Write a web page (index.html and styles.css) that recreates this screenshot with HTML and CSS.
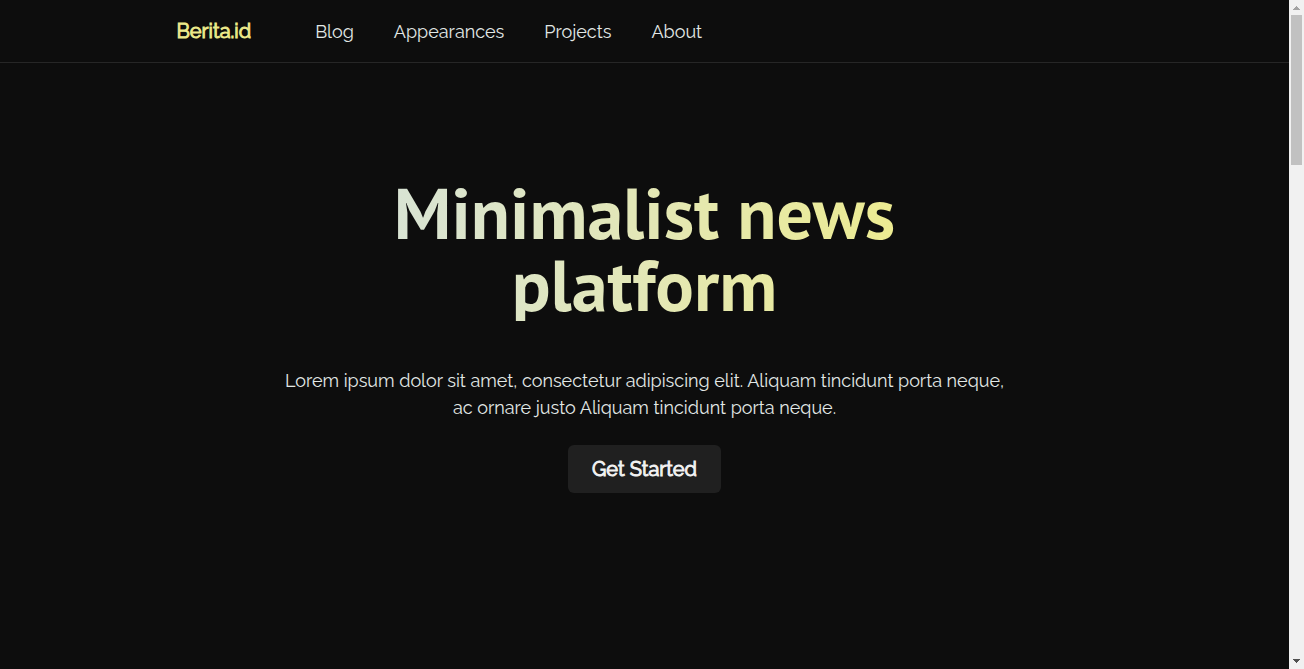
FILE: index.html
```html
<!DOCTYPE html>
<html lang="en">
<head>
<meta charset="utf-8">
<meta name="viewport" content="width=device-width, initial-scale=1">
<title>Berita.id</title>
<link rel="stylesheet" href="styles.css">
</head>
<body>
<div class="page">
  <header class="header">
    <div class="header-inner">
      <a class="brand" href="#">Berita.id</a>
      <nav class="nav">
        <a href="#">Blog</a>
        <a href="#">Appearances</a>
        <a href="#">Projects</a>
        <a href="#">About</a>
      </nav>
    </div>
  </header>
  <main class="hero">
    <h1 class="title">Minimalist news platform</h1>
    <p class="lead">Lorem ipsum dolor sit amet, consectetur adipiscing elit. Aliquam tincidunt porta neque, ac ornare justo Aliquam tincidunt porta neque.</p>
    <button class="cta" type="button">Get Started</button>
  </main>
</div>
<div class="scrollbar" aria-hidden="true">
  <svg class="arrow arrow-up" viewBox="0 0 15 15"><path d="M4 10h7v-1h-1v-1h-1v-1h-1v-1h-1v1h-1v1h-1v1h-1z"/></svg>
  <div class="track"><div class="thumb"></div></div>
  <svg class="arrow" viewBox="0 0 15 15"><path d="M4 5h7v1h-1v1h-1v1h-1v1h-1v-1h-1v-1h-1v-1h-1z"/></svg>
</div>
</body>
</html>
```
FILE: styles.css
```css
* {
  box-sizing: border-box;
}

body {
  margin: 0;
  display: flex;
  min-height: 100vh;
  background: #0d0d0d;
  color: #e2e8e6;
  font-family: Raleway, Lato, sans-serif;
  font-size: 18px;
  line-height: 27px;
}

a {
  color: inherit;
  text-decoration: none;
}

.page {
  flex: 1;
  min-width: 0;
}

.header {
  border-bottom: 1px solid #262626;
}

.header-inner {
  display: flex;
  align-items: center;
  gap: 64px;
  max-width: 936px;
  margin: 0 auto;
  padding: 16px 0;
}

.brand {
  color: #ece98a;
  font-size: 20px;
  line-height: 30px;
  -webkit-text-stroke: 1px currentColor;
}

.nav {
  display: flex;
  gap: 40px;
}

.hero {
  display: flex;
  flex-direction: column;
  align-items: center;
  max-width: 768px;
  margin: 0 auto;
  padding: 114px 24px 0;
  text-align: center;
}

.title {
  max-width: 576px;
  margin: 0;
  background: linear-gradient(to right, #d7e3d8, #e3e7b6 50%, #eeec8c);
  background-clip: text;
  -webkit-background-clip: text;
  color: transparent;
  font-family: "PT Sans", "Noto Sans", sans-serif;
  font-size: 72px;
  font-weight: 700;
  line-height: 72px;
}

.lead {
  margin: 46px 0 24px;
}

.cta {
  padding: 9px 24px;
  border: 0;
  border-radius: 6px;
  background: #202020;
  color: #f2f2f2;
  font: inherit;
  font-size: 20px;
  line-height: 30px;
  -webkit-text-stroke: 1px currentColor;
}

.scrollbar {
  display: flex;
  flex-direction: column;
  width: 15px;
  height: 100vh;
  background: #f1f1f1;
}

.arrow {
  width: 15px;
  height: 15px;
  fill: #505050;
}

.arrow-up {
  fill: #a3a3a3;
}

.track {
  flex: 1;
  padding: 0 2px;
}

.thumb {
  height: 23.5%;
  background: #c1c1c1;
}
```
